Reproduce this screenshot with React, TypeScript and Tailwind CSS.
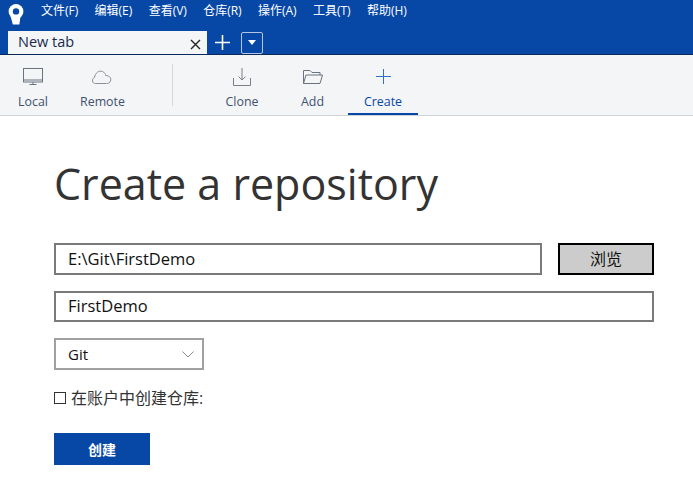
const cjk = "font-['Open_Sans','Noto_Sans_CJK_SC',sans-serif]";

const menus = ["文件(F)", "编辑(E)", "查看(V)", "仓库(R)", "操作(A)", "工具(T)", "帮助(H)"];

const Logo = () => (
  <svg width="16" height="21" viewBox="0 0 16 21">
    <circle cx="8" cy="7.5" r="7.4" fill="#fff" />
    <path d="M2.5 12 L12.5 12 L11.4 20.5 L4.8 20.5 Z" fill="#fff" />
    <circle cx="8" cy="7.4" r="3.2" fill="#0747a6" />
  </svg>
);

const ToolItem = ({
  label,
  width,
  active,
  children,
}: {
  label: string;
  width: string;
  active?: boolean;
  children: React.ReactNode;
}) => (
  <div className={`flex h-[60px] flex-col items-center ${width} ${active ? "border-b-2 border-[#0747a6]" : ""}`}>
    <div className="mt-[10px] flex h-[23px] items-center justify-center">{children}</div>
    <span className={`mt-[6px] text-[12.4px] leading-4 ${active ? "text-[#0747a6]" : "text-[#42526e]"}`}>{label}</span>
  </div>
);

export default function App() {
  return (
    <div className={`h-[484px] w-[693px] overflow-hidden bg-white ${cjk}`}>
      <div className="h-[55px] border-b border-[#0a2a5c] bg-[#0747a6]">
        <div className="flex h-[31px] items-start">
          <div className="ml-2 mt-[4px] w-[33px]">
            <Logo />
          </div>
          <div className="flex gap-[16.3px] pt-[2px]">
            {menus.map((m) => (
              <span key={m} className="text-[12px] leading-[18px] text-white">
                {m}
              </span>
            ))}
          </div>
        </div>
        <div className="flex h-[23px] items-center">
          <div className="ml-2 flex h-[23px] w-[199px] items-start justify-between bg-[#f4f5f7] pl-[10px] pr-[6px]">
            <span className="text-[14.5px] leading-[21px] text-[#172b4d]">New tab</span>
            <svg className="mt-[8px]" width="11" height="11" viewBox="0 0 11 11" stroke="#222" strokeWidth="1.4">
              <path d="M1 1 L10 10 M10 1 L1 10" />
            </svg>
          </div>
          <svg className="ml-2" width="15" height="15" viewBox="0 0 15 15" stroke="#fff" strokeWidth="1.6">
            <path d="M7.5 0 V15 M0 7.5 H15" />
          </svg>
          <div className="ml-[11px] flex h-[22px] w-[22px] items-center justify-center rounded-[2px] border border-[#b3c5e0]">
            <svg width="8" height="5" viewBox="0 0 8 5" fill="#fff">
              <path d="M0 0 H8 L4 5 Z" />
            </svg>
          </div>
        </div>
      </div>

      <div className="flex h-[61px] border-b border-[#d0d3d8] bg-[#f4f5f7]">
        <div className="flex w-[172px]">
          <ToolItem label="Local" width="w-[66px]">
            <svg width="22" height="18" viewBox="0 0 22 18" fill="none" stroke="#6b7280" strokeWidth="1">
              <rect x="1.5" y="0.5" width="19" height="13.5" />
              <path d="M1.5 12 H20.5 M7.5 16.5 H14.5 M11 14 V16.5" />
            </svg>
          </ToolItem>
          <ToolItem label="Remote" width="w-[73px]">
            <svg width="22" height="16" viewBox="1.5 0 22 16" fill="none" stroke="#8a8f98" strokeWidth="1">
              <path d="M5 14.5 C1.5 14.5 0.8 10 4 8.6 C4.6 4 8.5 1 12 2.5 C14 3.4 15 5 15.3 6.6 C19.5 6.6 21 9.5 20 12 C19.4 13.7 18 14.5 16 14.5 Z" />
            </svg>
          </ToolItem>
        </div>
        <div className="mt-[9px] h-[42px] w-px bg-[#d5d8dd]" />
        <div className="ml-[34px] flex">
          <ToolItem label="Clone" width="w-[70px]">
            <svg width="20" height="20" viewBox="0 0 20 20" fill="none" stroke="#7a7f88" strokeWidth="1">
              <path d="M10 1 V13 M6.5 9.5 L10 13 L13.5 9.5 M1.5 11 V18.5 H18.5 V11" />
            </svg>
          </ToolItem>
          <ToolItem label="Add" width="w-[71px]">
            <svg width="22" height="16" viewBox="0 0 22 16" fill="none" stroke="#6b7280" strokeWidth="1">
              <path d="M1.5 14.5 V1.5 H8 L10 3.5 H18 V6 M1.5 14.5 H18 L20.5 6 H4 L1.5 14.5" />
            </svg>
          </ToolItem>
          <ToolItem label="Create" width="w-[70px]" active>
            <svg width="15" height="15" viewBox="0 0 15 15" stroke="#2f6fc4" strokeWidth="1">
              <path d="M7.5 0 V15 M0 7.5 H15" />
            </svg>
          </ToolItem>
        </div>
      </div>

      <div className="px-[54px]">
        <h1 className="mt-[36px] h-[64px] text-[43px] leading-[64px] font-normal text-[#333]">Create a repository</h1>
        <div className="mt-[27px] flex gap-4">
          <div className="flex h-8 w-[488px] shrink-0 items-center border-2 border-[#7a7a7a] px-3 text-[16.5px] text-[#111]">E:\Git\FirstDemo</div>
          <button className="h-8 w-24 shrink-0 border-2 border-black bg-[#ccc] text-[16px] text-[#111]">浏览</button>
        </div>
        <div className="mt-4 flex h-[31px] w-[600px] items-center border-2 border-[#7a7a7a] px-3 text-[16.5px] text-[#111]">FirstDemo</div>
        <div className="mt-4 flex h-8 w-[150px] items-center justify-between border-2 border-[#a0a0a0] pl-3 pr-2 text-[15px] text-[#111]">
          <span>Git</span>
          <svg width="12" height="7" viewBox="0 0 12 7" fill="none" stroke="#888" strokeWidth="1">
            <path d="M0.5 0.5 L6 6 L11.5 0.5" />
          </svg>
        </div>
        <div className="mt-[16px] flex h-6 items-center">
          <div className="h-3 w-3 border border-[#333]" />
          <span className="ml-[5px] text-[16px] text-[#333]">在账户中创建仓库:</span>
        </div>
        <button className="mt-[23px] block h-8 w-24 bg-[#0747a6] text-[14px] font-bold text-white">创建</button>
      </div>
    </div>
  );
}
